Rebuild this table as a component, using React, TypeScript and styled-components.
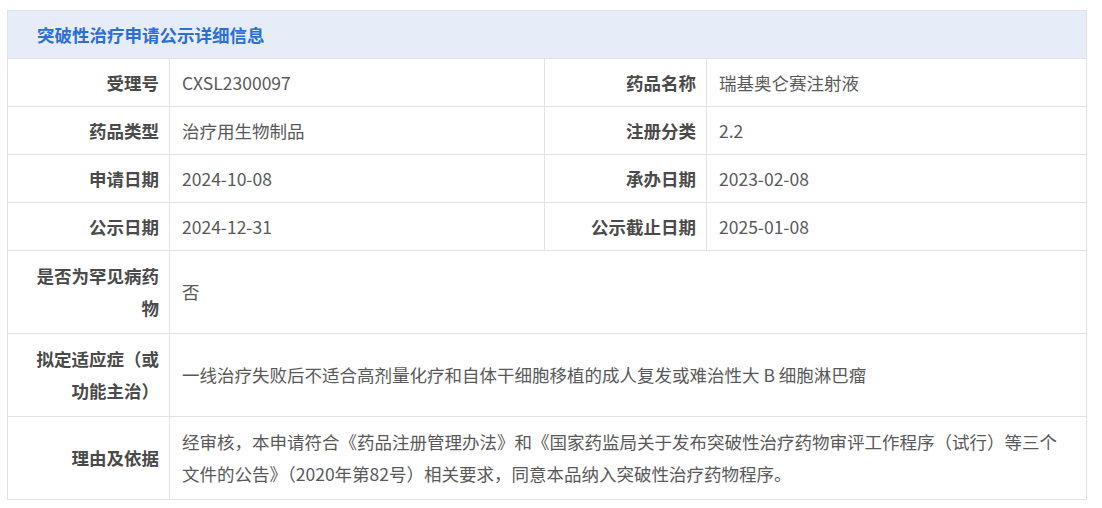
import React from 'react';
import styled, { createGlobalStyle } from 'styled-components';

const GlobalStyle = createGlobalStyle`
  body {
    margin: 0;
    background: #ffffff;
    font-family: "Noto Sans CJK SC", "Noto Sans", sans-serif;
  }
`;

const Page = styled.div`
  padding: 10px 16px 0 7px;
`;

const Table = styled.table`
  width: 1080px;
  border-collapse: collapse;
  table-layout: fixed;
  font-size: 17.5px;
  color: #595959;

  td,
  th {
    border: 1px solid #e3e3e3;
  }
`;

const HeaderCell = styled.th`
  height: 47px;
  padding: 0 0 0 29px;
  background: #e6edf9;
  color: #2a6ed6;
  font-weight: 700;
  text-align: left;
  line-height: 32px;
`;

const Label = styled.td<{ $tall?: boolean }>`
  padding: ${p => (p.$tall ? '9px 10px 9px 24px' : '8px 10px 7px 24px')};
  line-height: 32px;
  font-weight: 700;
  color: #4a4a4a;
  text-align: right;
  vertical-align: middle;
`;

const Value = styled.td<{ $tall?: boolean }>`
  padding: ${p => (p.$tall ? '9px 12px 9px' : '8px 12px 7px')};
  line-height: 32px;
  text-align: left;
  vertical-align: middle;
`;

const pairs: [string, string, string, string][] = [
  ['受理号', 'CXSL2300097', '药品名称', '瑞基奥仑赛注射液'],
  ['药品类型', '治疗用生物制品', '注册分类', '2.2'],
  ['申请日期', '2024-10-08', '承办日期', '2023-02-08'],
  ['公示日期', '2024-12-31', '公示截止日期', '2025-01-08'],
];

const wide: [string, string][] = [
  ['是否为罕见病药物', '否'],
  [
    '拟定适应症（或功能主治）',
    '一线治疗失败后不适合高剂量化疗和自体干细胞移植的成人复发或难治性大 B 细胞淋巴瘤',
  ],
  [
    '理由及依据',
    '经审核，本申请符合《药品注册管理办法》和《国家药监局关于发布突破性治疗药物审评工作程序（试行）等三个文件的公告》（2020年第82号）相关要求，同意本品纳入突破性治疗药物程序。',
  ],
];

export default function App() {
  return (
    <>
      <GlobalStyle />
      <Page>
        <Table>
          <colgroup>
            <col style={{ width: 162 }} />
            <col style={{ width: 375 }} />
            <col style={{ width: 162 }} />
            <col />
          </colgroup>
          <thead>
            <tr>
              <HeaderCell colSpan={4}>突破性治疗申请公示详细信息</HeaderCell>
            </tr>
          </thead>
          <tbody>
            {pairs.map(([l1, v1, l2, v2]) => (
              <tr key={l1}>
                <Label>{l1}</Label>
                <Value>{v1}</Value>
                <Label>{l2}</Label>
                <Value>{v2}</Value>
              </tr>
            ))}
            {wide.map(([l, v]) => (
              <tr key={l}>
                <Label $tall>{l}</Label>
                <Value colSpan={3} $tall>
                  {v}
                </Value>
              </tr>
            ))}
          </tbody>
        </Table>
      </Page>
    </>
  );
}
